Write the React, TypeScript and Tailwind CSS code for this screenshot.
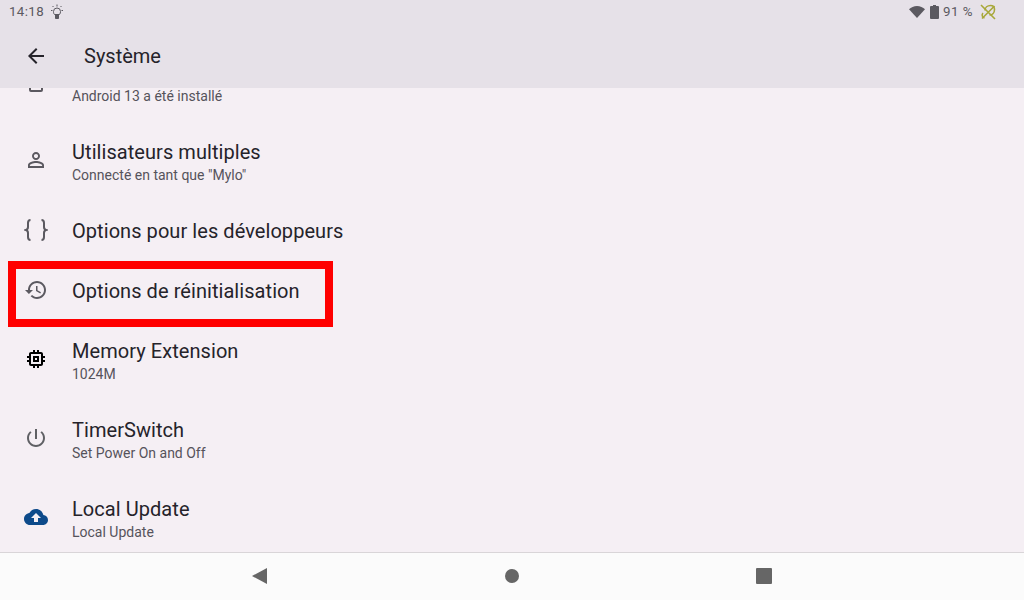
const rowIcon = "w-6 h-6 fill-[#5b5960]";

function Row({ icon, title, sub }: { icon: React.ReactNode; title?: string; sub?: string }) {
  return (
    <div className={`flex items-center pl-6 ${sub ? "h-[79px]" : "h-[60px]"}`}>
      <div className={`w-12 shrink-0 ${sub ? "pb-[7px]" : "pb-[6px]"}`}>{icon}</div>
      <div className={sub ? "pb-[3px]" : "pb-1"}>
        <div className="h-[26px] text-[20px] leading-[26px] tracking-[0.06px] text-[#25232a]">{title}</div>
        {sub && <div className="text-[14px] leading-[20px] text-[#55535b]">{sub}</div>}
      </div>
    </div>
  );
}

export default function App() {
  return (
    <div className="relative flex flex-col h-[600px] w-[1024px] overflow-hidden bg-[#f5eff4] font-['Roboto',sans-serif]">
      <header className="relative z-10 h-[88px] shrink-0 bg-[#e6e1e8]">
        <div className="flex items-center justify-between h-6 pl-[9px] pr-[28px] text-[13.3px] text-[#5b5960]">
          <div className="flex items-center gap-[7px]">
            <span className="tracking-[0.4px]">14:18</span>
            <svg viewBox="0 0 12 16" className="w-3 h-4 fill-none stroke-[#5b5960]">
              <path d="M3.500 10.500C2.500 9.500 2.500 8.500 2.500 7.500a3.500 3.500 0 0 1 7 0c0 1-.2 2-1 3z" />
              <path d="M4.500 11h3v3.500h-3z" fill="#5b5960" />
              <path d="M6 .5V2.500M1.500 2l1 1M10.500 2l-1 1M0 6.500H1.500M10.500 6.500H12" />
            </svg>
          </div>
          <div className="flex items-center">
            <svg viewBox="0 0 16 12" className="w-4 h-3 fill-[#5b5960]">
              <path d="M8 12 0 3.200C2 1.300 4.800 0 8 0s6 1.300 8 3.200z" />
            </svg>
            <svg viewBox="0 0 9 14" className="ml-[5px] w-[9px] h-[14px] fill-[#5b5960]">
              <path d="M3 0h3v1h2a1 1 0 0 1 1 1v11a1 1 0 0 1-1 1H1a1 1 0 0 1-1-1V2a1 1 0 0 1 1-1h2z" />
            </svg>
            <span className="ml-[4px] tracking-[0.5px]">91 %</span>
            <svg viewBox="0 0 16 16" className="ml-[7px] w-4 h-4 fill-none stroke-[#a8a83a] stroke-[1.6]">
              <path d="M1 1l14 14M14.500 2 2 14.500" />
              <path d="M5 6.500C5 3.500 7.500 1.500 10.500 1.500c2.500 0 4 1.500 4 4 0 3-2 5.500-5 5.500" />
              <path d="M3 9c-1.500 1.500-1 4.500 1.500 5" />
            </svg>
          </div>
        </div>
        <div className="flex items-center h-[64px]">
          <svg viewBox="0 0 24 24" className="ml-6 w-6 h-6 fill-[#25232a]">
            <path d="M20 11H7.830l5.590-5.590L12 4l-8 8 8 8 1.410-1.410L7.830 13H20v-2z" />
          </svg>
          <h1 className="ml-9 text-[20px] text-[#25232a]">Système</h1>
        </div>
      </header>

      <main className="flex-1 min-h-0 overflow-hidden">
        <div className="-mt-[43px]">
          <Row
            icon={
              <svg viewBox="0 0 24 24" className={rowIcon}>
                <path fillRule="evenodd" d="M7 1h10a2 2 0 0 1 2 2v18a2 2 0 0 1-2 2H7a2 2 0 0 1-2-2V3a2 2 0 0 1 2-2zm0 18v2h10v-2z" />
              </svg>
            }
            sub="Android 13 a été installé"
          />
          <Row
            icon={
              <svg viewBox="0 0 24 24" className={rowIcon}>
                <path d="M12 5.900c1.160 0 2.100.94 2.100 2.100s-.94 2.100-2.100 2.100S9.900 9.160 9.900 8s.94-2.100 2.100-2.100m0 9c2.970 0 6.100 1.460 6.100 2.100v1.100H5.900V17c0-.64 3.130-2.100 6.100-2.100M12 4C9.790 4 8 5.790 8 8s1.790 4 4 4 4-1.790 4-4-1.790-4-4-4zm0 9c-2.670 0-8 1.340-8 4v3h16v-3c0-2.660-5.330-4-8-4z" />
              </svg>
            }
            title="Utilisateurs multiples"
            sub={'Connecté en tant que "Mylo"'}
          />
          <Row
            icon={
              <svg viewBox="0 0 24 24" className="w-6 h-6 fill-none stroke-[#5b5960] stroke-2">
                <path d="M6.500 2C4.500 2 4 3 4 5v4c0 1.500-.5 2.500-2 3 1.500.5 2 1.500 2 3v4c0 2 .5 3 2.500 3" />
                <path d="M17.500 2c2 0 2.500 1 2.500 3v4c0 1.500.5 2.500 2 3-1.500.5-2 1.500-2 3v4c0 2-.5 3-2.500 3" />
              </svg>
            }
            title="Options pour les développeurs"
          />
          <Row
            icon={
              <svg viewBox="0 0 24 24" className={rowIcon}>
                <path d="M13 3c-4.970 0-9 4.030-9 9H1l3.890 3.890.07.14L9 12H6c0-3.870 3.130-7 7-7s7 3.130 7 7-3.130 7-7 7c-1.930 0-3.680-.79-4.940-2.060l-1.420 1.420C8.270 19.990 10.510 21 13 21c4.970 0 9-4.030 9-9s-4.030-9-9-9zm-1 5v5l4.280 2.540.72-1.210-3.500-2.080V8H12z" />
              </svg>
            }
            title="Options de réinitialisation"
          />
          <Row
            icon={
              <svg viewBox="0 0 24 24" className="w-6 h-6 fill-black">
                <path d="M15 9H9v6h6V9zm-2 4h-2v-2h2v2zm8-2V9h-2V7c0-1.100-.9-2-2-2h-2V3h-2v2h-2V3H9v2H7c-1.100 0-2 .9-2 2v2H3v2h2v2H3v2h2v2c0 1.100.9 2 2 2h2v2h2v-2h2v2h2v-2h2c1.100 0 2-.9 2-2v-2h2v-2h-2v-2h2zm-4 6H7V7h10v10z" />
              </svg>
            }
            title="Memory Extension"
            sub="1024M"
          />
          <Row
            icon={
              <svg viewBox="0 0 24 24" className="w-6 h-6 fill-[#5f6064]">
                <path d="M13 3h-2v10h2V3zm4.830 2.170l-1.420 1.420C17.990 7.860 19 9.810 19 12c0 3.870-3.130 7-7 7s-7-3.130-7-7c0-2.190 1.010-4.140 2.580-5.420L6.170 5.170C4.230 6.820 3 9.260 3 12c0 4.970 4.030 9 9 9s9-4.030 9-9c0-2.740-1.230-5.180-3.170-6.830z" />
              </svg>
            }
            title="TimerSwitch"
            sub="Set Power On and Off"
          />
          <Row
            icon={
              <svg viewBox="0 0 24 24" className="w-6 h-6 fill-[#0d4a8a]">
                <path d="M19.350 10.040C18.670 6.590 15.640 4 12 4 9.110 4 6.600 5.640 5.350 8.040 2.340 8.360 0 10.910 0 14c0 3.310 2.690 6 6 6h13c2.760 0 5-2.240 5-5 0-2.640-2.050-4.780-4.650-4.960zM14 13v4h-4v-4H7l5-5 5 5h-3z" />
              </svg>
            }
            title="Local Update"
            sub="Local Update"
          />
        </div>
      </main>

      <nav className="relative z-10 h-[48px] shrink-0 border-t border-[#d9d5d8] bg-[#fbfbfb] flex items-center justify-center gap-[238px] pb-[2px]">
        <svg viewBox="0 0 15 16" className="w-[15px] h-4 fill-[#666666]">
          <path d="M15 0v16L0 8z" />
        </svg>
        <div className="w-[14px] h-[14px] rounded-full bg-[#666666]" />
        <div className="-ml-px w-4 h-4 rounded-[1px] bg-[#666666]" />
      </nav>

      <div className="absolute z-20 left-2 top-[261px] w-[325px] h-[66px] border-8 border-[#ff0000]" />
    </div>
  );
}
